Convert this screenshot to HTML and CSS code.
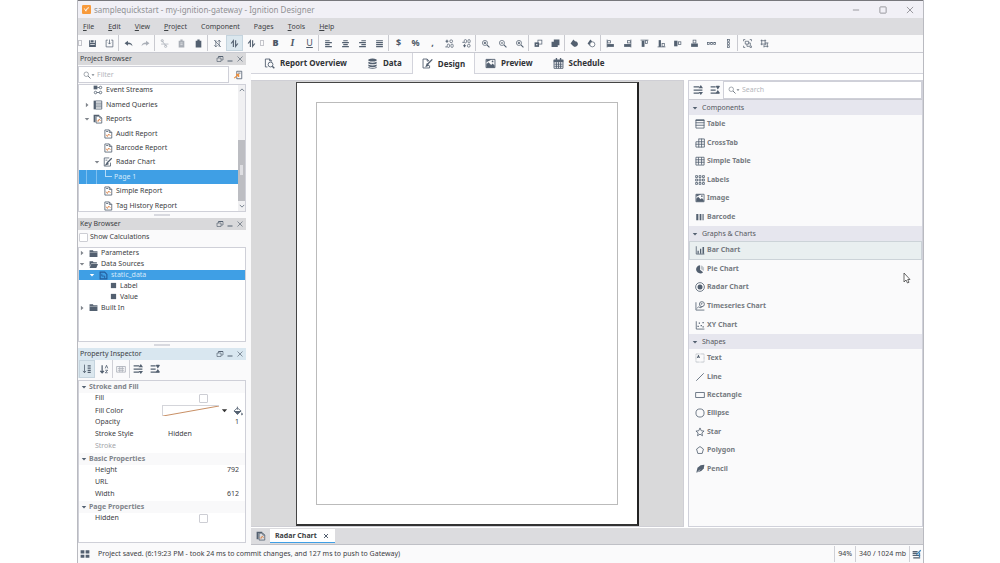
FILE: index.html
```html
<!DOCTYPE html>
<html lang="en">
<head>
<meta charset="utf-8">
<title>samplequickstart - my-ignition-gateway - Ignition Designer</title>
<link rel="stylesheet" href="styles.css">
</head>
<body>
<svg class="sprite" aria-hidden="true">
  <symbol id="save" viewBox="0 0 16 16"><path fill="currentColor" d="M2 2h2v5h8V2h2v12h-2V9H4v5H2zM5 2h5v4H5zM4 10h8v4H4z"/></symbol>
  <symbol id="import" viewBox="0 0 16 16"><path class="ln" d="M5 2H2v12h12V2h-3M8 1v8M5.500 6.500 8 9l2.500-2.500"/></symbol>
  <symbol id="undo" viewBox="0 0 16 16"><path fill="currentColor" d="M1 7.500 7 3v3c5 0 8 2 8 7-2-3-4-3.500-8-3.500V12z"/></symbol>
  <symbol id="redo" viewBox="0 0 16 16"><path fill="currentColor" d="M15 7.500 9 3v3c-5 0-8 2-8 7 2-3 4-3.500 8-3.500V12z"/></symbol>
  <symbol id="cut" viewBox="0 0 16 16"><path class="ln" d="M3 2l5 7h7M2 9h6l3 4"/><circle class="ln" cx="4" cy="3" r="2"/><circle class="ln" cx="10" cy="13" r="2"/></symbol>
  <symbol id="copy" viewBox="0 0 16 16"><path fill="currentColor" d="M3 3h3V1h4v2h3v12H3z"/><path stroke="#fff" d="M6 7h4M6 10h4"/></symbol>
  <symbol id="paste" viewBox="0 0 16 16"><path fill="currentColor" d="M3 3h3V1h4v2h3v12H3z"/></symbol>
  <symbol id="nosort" viewBox="0 0 16 16"><path class="ln" d="M2 2l12 12M5 2v12M2 11l3 3 3-3M11 14V2M8 5l3-3 3 3"/></symbol>
  <symbol id="updown" viewBox="0 0 16 16"><path class="th" d="M6 14V3L2 8M10 2v11l4-5"/></symbol>
  <symbol id="al" viewBox="0 0 16 16"><path class="th" d="M2 3h8M2 6.500h12M2 10h8M2 13.500h12"/></symbol>
  <symbol id="ac" viewBox="0 0 16 16"><path class="th" d="M4 3h8M2 6.500h12M4 10h8M2 13.500h12"/></symbol>
  <symbol id="ar" viewBox="0 0 16 16"><path class="th" d="M6 3h8M2 6.500h12M6 10h8M2 13.500h12"/></symbol>
  <symbol id="aj" viewBox="0 0 16 16"><path class="th" d="M2 3h12M2 6.500h12M2 10h12M2 13.500h12"/></symbol>
  <symbol id="decup" viewBox="0 0 16 16"><path class="th" d="M1 4h5M3.500 1.500v5"/><circle class="ln" cx="11" cy="4" r="2.500"/><rect class="ln" x="4" y="9" width="4" height="6" rx="2"/><rect class="ln" x="10.500" y="9" width="4" height="6" rx="2"/><path class="th" d="M1 14h2"/></symbol>
  <symbol id="decdn" viewBox="0 0 16 16"><path class="th" d="M2 12h5M4.500 9.500v5"/><circle class="ln" cx="12" cy="12" r="2.500"/><rect class="ln" x="4" y="1" width="4" height="6" rx="2"/><rect class="ln" x="10.500" y="1" width="4" height="6" rx="2"/><path class="th" d="M1 6h2"/></symbol>
  <symbol id="zin" viewBox="0 0 16 16"><circle class="ln" cx="7" cy="7" r="4.500"/><path class="th" d="M10.500 10.500 15 15M5 7h4M7 5v4"/></symbol>
  <symbol id="zout" viewBox="0 0 16 16"><circle class="ln" cx="7" cy="7" r="4.500"/><path class="th" d="M10.500 10.500 15 15M5 7h4"/></symbol>
  <symbol id="mag" viewBox="0 0 16 16"><circle class="ln" cx="6.500" cy="6.500" r="4.500"/><path class="th" d="M10 10l5 5"/></symbol>
  <symbol id="front" viewBox="0 0 16 16"><rect class="ln" x="7" y="2" width="7" height="7"/><path fill="currentColor" d="M1 6h8v8H1z"/><path fill="#fff" d="M4 9h2v2H4z"/></symbol>
  <symbol id="back" viewBox="0 0 16 16"><path fill="currentColor" d="M5 1h10v10h-3v3H1V5h4z"/></symbol>
  <symbol id="union" viewBox="0 0 16 16"><path fill="currentColor" d="M6 1l3 3a5 5 0 1 1-4 8L1 8z"/></symbol>
  <symbol id="subtract" viewBox="0 0 16 16"><path fill="currentColor" d="M6 1l3 3-4 8-4-4z"/><circle cx="9.500" cy="9.500" r="4.500" fill="#fff" stroke="currentColor" stroke-width="1.300"/></symbol>
  <symbol id="ol" viewBox="0 0 16 16"><path class="ln" d="M2 1v14"/><rect class="ln" x="3" y="3" width="5" height="4"/><path fill="currentColor" d="M2 9h12v5H2z"/></symbol>
  <symbol id="or" viewBox="0 0 16 16"><path class="ln" d="M14 1v14"/><rect class="ln" x="8" y="3" width="5" height="4"/><path fill="currentColor" d="M2 9h12v5H2z"/></symbol>
  <symbol id="ot" viewBox="0 0 16 16"><path class="ln" d="M1 2h14"/><path fill="currentColor" d="M3 3h5v11H3z"/><rect class="ln" x="10" y="3" width="3" height="5"/></symbol>
  <symbol id="ob" viewBox="0 0 16 16"><path class="ln" d="M1 14h14"/><path fill="currentColor" d="M3 2h4v12H3z"/><rect class="ln" x="9" y="8" width="4" height="5"/></symbol>
  <symbol id="om" viewBox="0 0 16 16"><path fill="currentColor" d="M2 3h6v10H2z"/><rect class="ln" x="10" y="5" width="4" height="5"/></symbol>
  <symbol id="oc" viewBox="0 0 16 16"><path fill="currentColor" d="M2 8h12v6H2z"/><rect class="ln" x="5.500" y="2" width="5" height="5"/></symbol>
  <symbol id="dh" viewBox="0 0 16 16"><rect class="ln" x="1" y="6" width="3" height="4"/><rect class="ln" x="6.500" y="6" width="3" height="4"/><rect class="ln" x="12" y="6" width="3" height="4"/></symbol>
  <symbol id="dv" viewBox="0 0 16 16"><rect class="ln" x="6" y="1" width="4" height="3"/><rect class="ln" x="6" y="6.500" width="4" height="3"/><rect class="ln" x="6" y="12" width="4" height="3"/></symbol>
  <symbol id="group" viewBox="0 0 16 16"><path class="ln" d="M1 4V1h3M12 1h3v3M15 12v3h-3M4 15H1v-3M4 4h6v5H4zM10 7h3v6H7V9"/></symbol>
  <symbol id="ungroup" viewBox="0 0 16 16"><path class="ln" d="M3 1v10M1 3h10M9 1v10M1 9h10M13 7v8M7 13h8M7 11v4M9 7h6"/></symbol>
  <symbol id="float" viewBox="0 0 16 16"><path class="ln" d="M5 6V3h9v7h-4M2 6h8v7H2z"/><path class="th" d="M5 3h9"/></symbol>
  <symbol id="min" viewBox="0 0 16 16"><path class="th" d="M3 12h10"/></symbol>
  <symbol id="close" viewBox="0 0 16 16"><path class="ln" d="M3 3l10 10M13 3 3 13"/></symbol>
  <symbol id="max" viewBox="0 0 16 16"><rect class="ln" x="3" y="3" width="10" height="10" rx="1"/></symbol>
  <symbol id="down" viewBox="0 0 16 16"><path fill="currentColor" d="M2 5h12l-6 7z"/></symbol>
  <symbol id="right" viewBox="0 0 16 16"><path fill="currentColor" d="M5 2v12l7-6z"/></symbol>
  <symbol id="locate" viewBox="0 0 16 16"><path class="ln" d="M6 2h8v12H6z"/><path class="ln" d="M8 5h4"/><path fill="none" stroke="#f0903c" stroke-width="2" d="M2 13 9 7M5 7h4v4"/></symbol>
  <symbol id="streams" viewBox="0 0 16 16"><path fill="currentColor" d="M1 1h6v6H1z"/><circle class="ln" cx="12" cy="4" r="2"/><circle class="ln" cx="4" cy="12" r="2"/><circle class="ln" cx="12" cy="12" r="2"/><path class="ln" d="M7 4h3M6 12h4"/></symbol>
  <symbol id="queries" viewBox="0 0 16 16"><path fill="currentColor" d="M1 1h3v14H1z"/><path class="ln" d="M4 1.500h10v13H4zM4 5h10M4 8h10M4 11h10"/></symbol>
  <symbol id="report" viewBox="0 0 16 16"><path class="ln" d="M3 1.500h7l4 4v9H3z"/><path class="ln" d="M10 1.500v4h4M5 4h3"/><path fill="none" stroke="#dc8a52" stroke-width="1.500" d="M5 9l2 3 2-4 3 3"/></symbol>
  <symbol id="reports" viewBox="0 0 16 16"><path fill="currentColor" d="M1 1h9v2H4v10H1z"/><path class="ln" d="M5 3.500h6l3 3v8H5zM11 3.500v3h3"/><path fill="none" stroke="#dc8a52" stroke-width="1.500" d="M6 10l2 2 2-4 2 3"/></symbol>
  <symbol id="edit" viewBox="0 0 16 16"><path class="ln" d="M10 1.500H2v13h10V9M4 5h3"/><path class="th" d="M6 10l8-8M5 12l2-3 1 2z"/></symbol>
  <symbol id="folder" viewBox="0 0 16 16"><path fill="currentColor" d="M1 2h6l1 2h7v10H1z"/><path stroke="#fff" stroke-width=".7" d="M1 6h14"/></symbol>
  <symbol id="fopen" viewBox="0 0 16 16"><path fill="currentColor" d="M1 2h6l1 2h6v2H4l-3 6zM4 7h12l-3 7H1z"/></symbol>
  <symbol id="dbfile" viewBox="0 0 16 16"><path fill="none" stroke="#245c9c" stroke-width="2" d="M2 2h8l4 4v8H2z"/><path fill="none" stroke="#245c9c" stroke-width="1.500" d="M5 5v4h5v4"/></symbol>
  <symbol id="sq" viewBox="0 0 16 16"><path fill="currentColor" d="M2 2h12v12H2z"/></symbol>
  <symbol id="sortcat" viewBox="0 0 16 16"><path class="ln" d="M4 1v13M1.500 11 4 14l2.500-3"/><path class="th" d="M9 3h5M9 6.500h5M9 10h5M9 13.500h5"/></symbol>
  <symbol id="sortaz" viewBox="0 0 16 16"><path class="th" d="M5 2v12M2 11l3 3 3-3"/><path class="ln" d="M10 7l2-5 2 5M10 10h4l-4 4h4"/></symbol>
  <symbol id="desc" viewBox="0 0 16 16"><path class="ln" d="M1 4h14v9H1zM3 7h10M3 10h10M6 4v9M10 4v9"/></symbol>
  <symbol id="expand" viewBox="0 0 16 16"><path class="th" d="M1 3h9M1 8h14M1 13h9"/><path fill="currentColor" d="M12.500 0 16 5H9zM12.500 16 9 11h7z"/></symbol>
  <symbol id="collapse" viewBox="0 0 16 16"><path class="th" d="M1 3h8M1 8h8M1 13h14M10 2h5"/><path fill="currentColor" d="M9 2h7l-3.500 5zM12.500 8l3.500 5H9z"/></symbol>
  <symbol id="bucket" viewBox="0 0 16 16"><path class="ln" d="M7 1v5M1.500 8 7 3l6 5-6 5z"/><path fill="currentColor" d="M2 8h11l-6 6zM14 10l2 3-2 2-1-2z"/></symbol>
  <symbol id="overview" viewBox="0 0 16 16"><path class="ln" d="M5 13H2V1.500h6L11 4v1M8 1.500V4h3"/><circle class="ln" cx="9.500" cy="9.500" r="3.500"/><path class="th" d="M12 12l3 3"/></symbol>
  <symbol id="data" viewBox="0 0 16 16"><path fill="currentColor" d="M2 2q6-2.500 12 0v2q-6 2.500-12 0zM2 5.500q6 2.500 12 0v2.500q-6 2.500-12 0zM2 9.500q6 2.500 12 0V12q-6 2.500-12 0zM2 13q6 2.500 12 0v1.500q-6 2-12 0z"/></symbol>
  <symbol id="design" viewBox="0 0 16 16"><path class="ln" d="M11 11v3.500H1.500v-13h6l3 3M7.500 1.500v3h2"/><path class="th" d="M8 9l7-7M6.500 11.500l1-2.500 1.500 1.500z"/></symbol>
  <symbol id="image" viewBox="0 0 16 16"><path class="ln" d="M1.500 2h13v12h-13z"/><path fill="currentColor" d="M2 14V9l3-3 4 4 2-2 3 3v3zM2 2h8L2 6z"/><circle fill="currentColor" cx="11" cy="5" r="1.300"/></symbol>
  <symbol id="cal" viewBox="0 0 16 16"><path fill="currentColor" d="M1 2h14v4H1zM4 0h2v3H4zM10 0h2v3h-2z"/><path class="ln" d="M1.500 3v12h13V3M2 9h12M2 12h12M5 6v9M8 6v9M11 6v9"/></symbol>
  <symbol id="table" viewBox="0 0 16 16"><path class="ln" d="M1.500 1.500h13v13h-13zM1 6h14M1 10h14"/><path class="th" d="M1 2h14"/></symbol>
  <symbol id="cross" viewBox="0 0 16 16"><path class="ln" d="M6 1.500h9v13H1.500V6H15M1 10h14M6 1v14M10.500 1v14"/></symbol>
  <symbol id="simple" viewBox="0 0 16 16"><path class="ln" d="M1.500 2h13v12.500h-13zM1 6h14M1 10h14M5.500 2v12M10.500 2v12"/></symbol>
  <symbol id="labels" viewBox="0 0 16 16"><path class="ln" d="M1 1h3v3H1zM6.500 1h3v3h-3zM12 1h3v3h-3zM1 6.500h3v3H1zM6.500 6.500h3v3h-3zM12 6.500h3v3h-3zM1 12h3v3H1zM6.500 12h3v3h-3zM12 12h3v3h-3z"/></symbol>
  <symbol id="barcode" viewBox="0 0 16 16"><path fill="currentColor" d="M2 3h3v10H2zM6 3h1v10H6zM8 3h2v10H8zM11 3h1v10h-1zM13 3h1v10h-1z"/></symbol>
  <symbol id="bar" viewBox="0 0 16 16"><path class="ln" d="M2 2v12.500h13"/><path fill="currentColor" d="M4 9h2v5H4zM8 6h2v8H8zM12 3h2.500v11H12z"/></symbol>
  <symbol id="pie" viewBox="0 0 16 16"><path fill="currentColor" d="M8 2v7l5 4A6.500 6.500 0 1 1 8 2z"/><path fill="currentColor" opacity=".35" d="M9 2a6.500 6.500 0 0 1 5 9L9 8z"/></symbol>
  <symbol id="radar" viewBox="0 0 16 16"><circle class="ln" cx="8" cy="8" r="7"/><circle fill="currentColor" cx="8" cy="8" r="4"/></symbol>
  <symbol id="time" viewBox="0 0 16 16"><path class="ln" d="M1.500 2v12.500H15M3 12l3-3 2 2 4-2"/><circle class="ln" cx="11" cy="5" r="4"/><path class="ln" d="M11 3v2H9"/></symbol>
  <symbol id="xy" viewBox="0 0 16 16"><path class="ln" d="M2 2v12.500h13"/><path fill="currentColor" d="M4 9h2v2H4zM6 4h2v2H6zM9 8h2v2H9zM12 3h2v2h-2zM12 10h2v2h-2z"/></symbol>
  <symbol id="text" viewBox="0 0 16 16"><path class="ln" stroke-dasharray="1 1" opacity=".6" d="M1.500 1.500h13v13h-13z"/><path fill="currentColor" d="M3 8l2-5h1l2 5H6.500L6 7H5l-.5 1z"/></symbol>
  <symbol id="line" viewBox="0 0 16 16"><path class="ln" d="M2 14 14 2"/></symbol>
  <symbol id="rect" viewBox="0 0 16 16"><path class="ln" d="M1 4h14v8H1z"/></symbol>
  <symbol id="ellipse" viewBox="0 0 16 16"><circle class="ln" cx="8" cy="8" r="6.500"/></symbol>
  <symbol id="star" viewBox="0 0 16 16"><path class="ln" d="M8 1.500l2 4.500 4.500.5-3.500 3 1 4.500-4-2.500L4 14l1-4.500-3.500-3L6 6z"/></symbol>
  <symbol id="poly" viewBox="0 0 16 16"><path class="ln" d="M8 2.500l5.500 4-2 7h-7l-2-7z"/></symbol>
  <symbol id="pencil" viewBox="0 0 16 16"><path fill="currentColor" d="M2 14l2-8 5-4 6-1-1 6-4 4z"/><path stroke="#fff" d="M3 14l5-5"/></symbol>
  <symbol id="grid" viewBox="0 0 16 16"><path fill="currentColor" d="M1 2h6v5H1zM9 2h6v5H9zM1 9h6v5H1zM9 9h6v5H9z"/></symbol>
  <symbol id="gc" viewBox="0 0 16 16"><path class="th" d="M1 4h8M1 7h7M1 10h12M2 14h11"/><path fill="none" stroke="#3c83b8" stroke-width="2" d="M7 9l7-7M12 6v7"/></symbol>
</svg>

<div class="app">
  <header class="titlebar">
    <svg class="logo" viewBox="0 0 16 16"><rect width="16" height="16" rx="2" fill="#f79a3c"/><path d="M4 6l3 5 1-4 4-3M9 8l2-2" fill="none" stroke="#fff" stroke-width="1.500"/></svg>
    <h1>samplequickstart - my-ignition-gateway - Ignition Designer</h1>
    <div class="winbtns">
      <button aria-label="Minimize"><svg viewBox="0 0 16 16"><path class="ln" d="M3 8h10"/></svg></button>
      <button aria-label="Maximize"><svg><use href="#max"/></svg></button>
      <button aria-label="Close"><svg><use href="#close"/></svg></button>
    </div>
  </header>

  <nav class="menubar">
    <button><u>F</u>ile</button><button><u>E</u>dit</button><button><u>V</u>iew</button><button><u>P</u>roject</button><button>Component</button><button>Pages</button><button><u>T</u>ools</button><button><u>H</u>elp</button>
  </nav>

  <div class="toolbar" role="toolbar">
    <i class="grip"></i>
    <div class="g n2 first"><button aria-label="Save"><svg><use href="#save"/></svg></button><button aria-label="Update project"><svg><use href="#import"/></svg></button></div>
    <div class="g n2"><button aria-label="Undo"><svg><use href="#undo"/></svg></button><button aria-label="Redo" class="dim"><svg><use href="#redo"/></svg></button></div>
    <div class="g n3"><button aria-label="Cut" class="dim"><svg><use href="#cut"/></svg></button><button aria-label="Copy" class="dim"><svg><use href="#copy"/></svg></button><button aria-label="Paste"><svg><use href="#paste"/></svg></button></div>
    <div class="g n3"><button aria-label="Communication off"><svg><use href="#nosort"/></svg></button><button aria-label="Communication read-only" class="on"><svg><use href="#updown"/></svg></button><button aria-label="Communication read/write"><svg><use href="#updown"/></svg></button></div>
    <i class="grip gap"></i>
    <div class="g n3 first glyph"><button><b>B</b></button><button><em>I</em></button><button><u>U</u></button></div>
    <div class="g n4"><button aria-label="Align left"><svg><use href="#al"/></svg></button><button aria-label="Align center"><svg><use href="#ac"/></svg></button><button aria-label="Align right"><svg><use href="#ar"/></svg></button><button aria-label="Justify"><svg><use href="#aj"/></svg></button></div>
    <div class="g n5 glyph"><button>$</button><button>%</button><button>,</button><button aria-label="Add decimal"><svg><use href="#decup"/></svg></button><button aria-label="Remove decimal"><svg><use href="#decdn"/></svg></button></div>
    <div class="g n3"><button aria-label="Zoom in"><svg><use href="#zin"/></svg></button><button aria-label="Zoom out"><svg><use href="#zout"/></svg></button><button aria-label="Zoom to fit"><svg><use href="#zin"/></svg></button></div>
    <div class="g n2"><button aria-label="Bring to front"><svg><use href="#front"/></svg></button><button aria-label="Send to back"><svg><use href="#back"/></svg></button></div>
    <div class="g n2"><button aria-label="Union"><svg><use href="#union"/></svg></button><button aria-label="Subtract"><svg><use href="#subtract"/></svg></button></div>
    <div class="g n8"><button aria-label="Align left edges"><svg><use href="#ol"/></svg></button><button aria-label="Align right edges"><svg><use href="#or"/></svg></button><button aria-label="Align tops"><svg><use href="#ot"/></svg></button><button aria-label="Align bottoms"><svg><use href="#ob"/></svg></button><button aria-label="Align middles"><svg><use href="#om"/></svg></button><button aria-label="Align centers"><svg><use href="#oc"/></svg></button><button aria-label="Distribute horizontally"><svg><use href="#dh"/></svg></button><button aria-label="Distribute vertically"><svg><use href="#dv"/></svg></button></div>
    <div class="g n2"><button aria-label="Group"><svg><use href="#group"/></svg></button><button aria-label="Ungroup"><svg><use href="#ungroup"/></svg></button></div>
  </div>

  <div class="main">
    <aside class="left">
      <section class="panel">
        <h2>Project Browser<span><button aria-label="Float"><svg><use href="#float"/></svg></button><button aria-label="Minimize"><svg><use href="#min"/></svg></button><button aria-label="Close"><svg><use href="#close"/></svg></button></span></h2>
        <div class="filter">
          <label class="search"><svg><use href="#mag"/></svg><svg class="caret"><use href="#down"/></svg><input type="text" placeholder="Filter" aria-label="Filter"></label>
          <button aria-label="Locate"><svg><use href="#locate"/></svg></button>
        </div>
        <div class="scroller">
          <ul class="tree project">
            <li><svg class="tw"></svg><svg><use href="#streams"/></svg>Event Streams</li>
            <li><svg class="tw"><use href="#right"/></svg><svg><use href="#queries"/></svg>Named Queries</li>
            <li><svg class="tw"><use href="#down"/></svg><svg><use href="#reports"/></svg>Reports</li>
            <li class="d1"><svg class="tw"></svg><svg><use href="#report"/></svg>Audit Report</li>
            <li class="d1"><svg class="tw"></svg><svg><use href="#report"/></svg>Barcode Report</li>
            <li class="d1"><svg class="tw"><use href="#down"/></svg><svg><use href="#edit"/></svg>Radar Chart</li>
            <li class="page sel"><i class="rule"></i><i class="rule"></i><i class="elbow"></i>Page 1</li>
            <li class="d1"><svg class="tw"></svg><svg><use href="#report"/></svg>Simple Report</li>
            <li class="d1"><svg class="tw"></svg><svg><use href="#report"/></svg>Tag History Report</li>
          </ul>
          <div class="scrollbar"><svg viewBox="0 0 16 16"><path class="th" d="M2 11l6-6 6 6"/></svg><i class="thumb"><i></i></i><svg viewBox="0 0 16 16"><path class="th" d="M2 5l6 6 6-6"/></svg></div>
        </div>
      </section>
      <i class="splitter"></i>
      <section class="panel">
        <h2>Key Browser<span><button aria-label="Float"><svg><use href="#float"/></svg></button><button aria-label="Minimize"><svg><use href="#min"/></svg></button><button aria-label="Close"><svg><use href="#close"/></svg></button></span></h2>
        <label class="calc"><input type="checkbox">Show Calculations</label>
        <div class="keybox">
          <ul class="tree keys">
            <li><svg class="tw"><use href="#right"/></svg><svg><use href="#folder"/></svg>Parameters</li>
            <li><svg class="tw"><use href="#down"/></svg><svg><use href="#fopen"/></svg>Data Sources</li>
            <li class="d1 sel"><svg class="tw"><use href="#down"/></svg><svg><use href="#dbfile"/></svg>static_data</li>
            <li class="d2"><svg class="tw"></svg><svg class="small"><use href="#sq"/></svg>Label</li>
            <li class="d2"><svg class="tw"></svg><svg class="small"><use href="#sq"/></svg>Value</li>
            <li><svg class="tw"><use href="#right"/></svg><svg><use href="#folder"/></svg>Built In</li>
          </ul>
        </div>
      </section>
      <i class="splitter"></i>
      <section class="panel grow">
        <h2 class="active">Property Inspector<span><button aria-label="Float"><svg><use href="#float"/></svg></button><button aria-label="Minimize"><svg><use href="#min"/></svg></button><button aria-label="Close"><svg><use href="#close"/></svg></button></span></h2>
        <div class="proptools"><button class="on" aria-label="Categorized"><svg><use href="#sortcat"/></svg></button><button aria-label="Alphabetical"><svg><use href="#sortaz"/></svg></button><button class="sep dim" aria-label="Description"><svg><use href="#desc"/></svg></button><button class="sep" aria-label="Expand all"><svg><use href="#expand"/></svg></button><button aria-label="Collapse all"><svg><use href="#collapse"/></svg></button></div>
        <div class="props">
          <h3><svg><use href="#down"/></svg>Stroke and Fill</h3>
          <div class="prop"><label for="fill">Fill</label><input type="checkbox" id="fill"></div>
          <div class="prop"><label for="fc">Fill Color</label><button id="fc" class="swatch" aria-label="Fill Color"><svg class="diag" viewBox="0 0 58 11" preserveAspectRatio="none"><path d="M0 11 58 0" stroke="#c4875a" fill="none"/></svg><svg><use href="#down"/></svg></button><button class="bucket" aria-label="Bind"><svg><use href="#bucket"/></svg></button></div>
          <div class="prop"><label for="op">Opacity</label><input type="text" id="op" value="1"></div>
          <div class="prop"><label for="ss">Stroke Style</label><select id="ss"><option>Hidden</option></select></div>
          <div class="prop off"><span>Stroke</span></div>
          <h3><svg><use href="#down"/></svg>Basic Properties</h3>
          <div class="prop"><label for="h">Height</label><input type="text" id="h" value="792"></div>
          <div class="prop"><label for="url">URL</label><input type="text" id="url"></div>
          <div class="prop"><label for="w">Width</label><input type="text" id="w" value="612"></div>
          <h3><svg><use href="#down"/></svg>Page Properties</h3>
          <div class="prop"><label for="hid">Hidden</label><input type="checkbox" id="hid"></div>
        </div>
      </section>
    </aside>

    <div class="workspace">
      <nav class="tabs">
        <button><svg><use href="#overview"/></svg>Report Overview</button>
        <button><svg><use href="#data"/></svg>Data</button>
        <button class="cur"><svg><use href="#design"/></svg>Design</button>
        <button><svg><use href="#image"/></svg>Preview</button>
        <button><svg><use href="#cal"/></svg>Schedule</button>
      </nav>
      <div class="editor">
        <div class="canvas"><div class="sheet"><div class="margins"></div></div></div>
        <aside class="palette">
          <div class="ptools"><button aria-label="Expand all"><svg><use href="#expand"/></svg></button><button aria-label="Collapse all"><svg><use href="#collapse"/></svg></button><label class="search"><svg><use href="#mag"/></svg><svg class="caret"><use href="#down"/></svg><input type="text" placeholder="Search" aria-label="Search"></label></div>
          <h3><svg><use href="#down"/></svg>Components</h3>
          <div class="items six">
            <button><svg><use href="#table"/></svg>Table</button><button><svg><use href="#cross"/></svg>CrossTab</button><button><svg><use href="#simple"/></svg>Simple Table</button><button><svg><use href="#labels"/></svg>Labels</button><button><svg><use href="#image"/></svg>Image</button><button><svg><use href="#barcode"/></svg>Barcode</button>
          </div>
          <h3><svg><use href="#down"/></svg>Graphs &amp; Charts</h3>
          <div class="items five">
            <button class="hover"><svg><use href="#bar"/></svg>Bar Chart</button><button><svg><use href="#pie"/></svg>Pie Chart</button><button><svg><use href="#radar"/></svg>Radar Chart</button><button><svg><use href="#time"/></svg>Timeseries Chart</button><button><svg><use href="#xy"/></svg>XY Chart</button>
          </div>
          <h3><svg><use href="#down"/></svg>Shapes</h3>
          <div class="items seven">
            <button><svg><use href="#text"/></svg>Text</button><button><svg><use href="#line"/></svg>Line</button><button><svg><use href="#rect"/></svg>Rectangle</button><button><svg><use href="#ellipse"/></svg>Ellipse</button><button><svg><use href="#star"/></svg>Star</button><button><svg><use href="#poly"/></svg>Polygon</button><button><svg><use href="#pencil"/></svg>Pencil</button>
          </div>
          <svg class="cursor" viewBox="0 0 8 12"><path d="M1 1v9l2-2 1.500 3 1.500-.7L4.700 7.500H7z" fill="#fff" stroke="#444" stroke-width=".8"/></svg>
        </aside>
      </div>
      <div class="doctabs"><svg><use href="#reports"/></svg><div class="doc">Radar Chart<button aria-label="Close tab"><svg viewBox="0 0 16 16"><path class="th" d="M4 4l8 8M12 4l-8 8"/></svg></button></div></div>
    </div>
  </div>

  <footer class="status">
    <svg><use href="#grid"/></svg>
    <p>Project saved. (6:19:23 PM - took 24 ms to commit changes, and 127 ms to push to Gateway)</p>
    <span>94%</span><span>340 / 1024 mb</span><span><svg><use href="#gc"/></svg></span>
  </footer>
</div>
</body>
</html>
```
FILE: styles.css
```css
* { box-sizing: border-box; }
body { margin: 0; background: #fff; font: 7px/10px "Noto Sans", "Open Sans", sans-serif; color: #3c4043; }
.sprite { position: absolute; width: 0; height: 0; }
.ln { fill: none; stroke: currentColor; stroke-width: 1.3; }
.th { fill: none; stroke: currentColor; stroke-width: 2; }
svg { width: 10px; height: 10px; flex: none; color: #536070; display: block; }
button, input, select { font: inherit; color: inherit; background: none; border: 0; padding: 0; margin: 0; min-width: 0; outline: 0; }
button { display: flex; align-items: center; justify-content: center; white-space: nowrap; }
h1, h2, h3, p, ul { margin: 0; padding: 0; font-size: inherit; font-weight: 400; list-style: none; }
i { display: block; }
u { text-underline-offset: 1px; }

.app { display: flex; flex-direction: column; min-height: 100vh; margin: 0 76px 0 77px; background: #fafafb; border: solid #b9bac0; border-width: 0 1px; }
.titlebar { display: flex; align-items: center; height: 18px; padding: 0 8px 0 4px; gap: 3px; border-top: 1px solid #77777c; background: #f1f0f6; color: #909094; font-size: 8px; }
.logo { width: 9px; height: 9px; }
.titlebar h1 { flex: 1; }
.winbtns { display: flex; gap: 17px; }
.winbtns svg { color: #86868b; }
.menubar { display: flex; gap: 14px; height: 17px; padding: 0 5px; background: #dcdcdf; }
.toolbar { display: flex; align-items: center; height: 18px; padding-bottom: 1px; border-bottom: 1px solid #c9cad1; }
.toolbar svg { width: 9px; height: 9px; }
.grip { width: 4px; height: 6px; border: 1px solid #c4c5cb; }
.grip.gap { margin-right: 1px; }
.g { display: flex; height: 16px; padding-left: 1px; border-left: 1px solid #c9cad0; }
.g.first { border-left-color: transparent; }
.g button { flex: 1; }
.n2 { width: 36px; } .n3 { width: 53px; } .n4 { width: 70px; } .n5 { width: 87px; } .n8 { width: 137px; }
.glyph { font-size: 9px; color: #4c5866; font-weight: 700; }
.glyph em { font-family: "Liberation Serif", serif; font-size: 10px; }
.glyph u { font-weight: 400; }
.toolbar .dim svg, .dim svg { color: #a9aeb6; }
.on { background: #dbe7ee; box-shadow: inset 0 0 0 1px #c5d4de; }

.main { display: flex; flex: 1; gap: 5px; }
.left { display: flex; flex-direction: column; width: 168px; padding-bottom: 2px; }
.panel h2 { display: flex; align-items: center; justify-content: space-between; height: 12px; padding: 0 2px; background: #d9d9db; }
.panel h2.active { background: #d9e7f0; }
.panel h2 span { display: flex; gap: 2px; }
.panel h2 svg { width: 8px; height: 8px; }
.filter { display: flex; height: 19px; padding: 1px 0; }
.filter > button { width: 17px; }
.search { display: flex; flex: 1; align-items: center; background: #fff; border: 1px solid #cfd0d8; padding-left: 4px; }
.search svg { width: 8px; height: 8px; color: #777f88; }
.search .caret { width: 4px; height: 4px; margin-right: 2px; }
.search input { flex: 1; width: 40px; }
::placeholder { color: #b4b6bb; opacity: 1; }
.scroller { display: flex; height: 128px; overflow: hidden; background: #fff; border: 1px solid #cfd0d8; }
.tree li { display: flex; align-items: center; gap: 3px; white-space: nowrap; }
.project { flex: 1; display: grid; grid-template-rows: repeat(9, 1fr); height: 130px; margin-top: -2px; }
.tree .tw { width: 6px; height: 6px; color: #80858c; }
.project li { padding-left: 5px; }
.project li.d1 { padding-left: 15px; }
.tree li.sel { background: #3f9fe5; color: #d5eafb; }
.tree li.sel .tw { color: #fff; }
.project li.page { padding-left: 7px; gap: 0; }
.rule { width: 10px; align-self: stretch; border-left: 1px solid #7fc0ef; }
.elbow { width: 7px; height: 7px; margin: 0 2px 6px -1px; border: solid #b5dbf7; border-width: 0 0 1px 1px; }
.scrollbar { width: 7px; display: flex; flex-direction: column; align-items: center; background: #f0f0f2; }
.scrollbar svg { width: 6px; height: 10px; }
.thumb { width: 7px; height: 61px; margin: auto 0 0; background: #bcbdc2; padding: 25px 2px; }
.thumb i { height: 10px; background: #dedee2; }
.splitter { height: 6px; flex: none; padding: 2px 76px; }
.splitter::after { content: ""; display: block; height: 2px; background: #d8d9df; }
input[type=checkbox] { appearance: none; width: 9px; height: 9px; background: #fff; border: 1px solid #cdced4; border-radius: 1px; }
.calc { display: flex; align-items: center; gap: 2px; height: 17px; padding: 0 1px 3px; }
.keybox { height: 95px; background: #fff; border: 1px solid #cfd0d8; }
.keys { display: grid; grid-template-rows: repeat(6, 1fr); height: 65px; }
.keys .tw { margin-right: 1px; }
.keys svg { width: 9px; height: 9px; }
.keys li.d1 { padding-left: 10px; }
.keys li.d2 { padding-left: 21px; }
.keys svg.small { width: 7px; height: 7px; }

.grow { flex: 1; display: flex; flex-direction: column; }
.proptools { display: flex; height: 20px; padding-bottom: 2px; }
.proptools button { width: 17px; border-left: 1px solid transparent; }
.proptools .sep { border-left-color: #cfd0d6; }
.props { flex: 1; background: #fff; border: 1px solid #cfd0d8; }
.props h3 { display: flex; align-items: center; gap: 2px; height: 12px; padding-left: 2px; background: #f9f9fa; color: #80848a; font-weight: 700; }
.props h3 svg, .palette h3 svg { width: 6px; height: 6px; }
.prop { display: grid; grid-template-columns: 67px 1fr 17px; align-items: center; height: 12px; padding: 0 0 2px 16px; }
.prop input[type=text] { grid-column: 2 / 4; height: 10px; padding-right: 6px; text-align: right; }
.prop input[type=checkbox] { grid-column: 2 / 4; justify-self: center; }
.prop select { appearance: none; padding-left: 6px; }
.prop.off { color: #a3a5aa; }
.swatch { justify-content: space-between; height: 11px; }
.swatch svg { width: 7px; height: 7px; color: #333; }
.swatch .diag { flex: 1; height: 11px; margin-right: 2px; border: solid #d4d5da; border-width: 1px 0 0 1px; }
.bucket { padding-left: 2px; }

.workspace { flex: 1; display: flex; flex-direction: column; min-width: 0; }
.tabs { display: flex; height: 21px; padding-left: 3px; border-bottom: 1px solid #d3d4dc; font-size: 8px; font-weight: 700; color: #303236; }
.tabs button { gap: 5px; padding: 0 9px; border: solid transparent; border-width: 0 1px; }
.tabs svg { width: 11px; height: 11px; }
.tabs .cur { background: #fff; border-color: #d3d4dc; margin-bottom: -1px; }
.editor { flex: 1; display: flex; gap: 4px; padding: 6px 0 1px; background: #fff; }
.canvas { flex: 1; display: flex; padding: 1px 44px 0 45px; background: #d9d9da; border: 1px solid #cfcfd5; border-left: 0; }
.sheet { flex: 1; padding: 19px; background: #fff; border: 1px solid #444; border-width: 1px 2px 2px 1px; border-right-color: #222; border-bottom-color: #333; }
.margins { height: 100%; border: 1px solid #bbb; }
.palette { position: relative; width: 235px; border: 1px solid #d0d1da; background: #fafafb; font-weight: 700; color: #767a81; }
.ptools { display: flex; height: 19px; font-weight: 400; border-bottom: 1px solid #c9cad1; }
.ptools button { width: 17px; }
.palette h3 { display: flex; align-items: center; gap: 4px; height: 15px; padding-left: 3px; background: #e6e6ee; color: #55585e; }
.items { display: grid; grid-auto-rows: 1fr; }
.items button { justify-content: flex-start; gap: 2px; padding-left: 5px; border: 1px solid transparent; }
.items .hover { background: #e9eff0; border-color: #ccd3d8; }
.six { height: 111px; } .five { height: 93px; } .seven { height: 129px; }
.cursor { position: absolute; right: 11px; top: 191px; width: 8px; height: 12px; }
.doctabs { display: flex; align-items: center; gap: 4px; height: 17px; padding-left: 5px; background: #dcdcdf; border-bottom: 1px solid #bfc0c6; }
.doc { display: flex; align-items: center; gap: 5px; height: 14px; padding: 0 5px; background: #fff; border-bottom: 1px solid #3f9fe5; font-weight: 700; }
.doc svg { width: 8px; height: 8px; }
.status { display: flex; align-items: center; height: 18px; padding-left: 2px; }
.status p { flex: 1; padding-left: 8px; }
.status span { display: flex; align-items: center; height: 16px; padding: 0 3px; border-left: 1px solid #cfd0d6; }
.status span:last-child { padding: 0 1px 0 2px; }
```
